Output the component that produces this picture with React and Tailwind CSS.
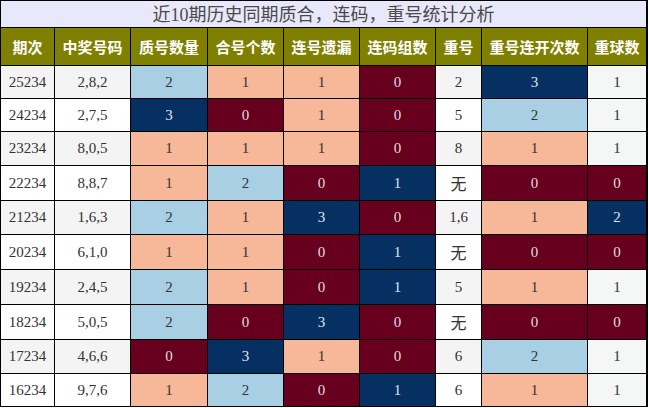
import React from "react";

const M = "bg-[#67001f] text-[#e4dede]";
const S = "bg-[#f7b799] text-[#333333]";
const L = "bg-[#a8cfe4] text-[#333333]";
const N = "bg-[#053061] text-[#e0e4ea]";

const heads = ["期次", "中奖号码", "质号数量", "合号个数", "连号遗漏", "连码组数", "重号", "重号连开次数", "重球数"];

const rows = [
  { h: "h-[32px]", c: ["25234", "2,8,2", ["2", L], ["1", S], ["1", S], ["0", M], "2", ["3", N], "1"] },
  { h: "h-[32px]", c: ["24234", "2,7,5", ["3", N], ["0", M], ["1", S], ["0", M], "5", ["2", L], "1"] },
  { h: "h-[33px]", c: ["23234", "8,0,5", ["1", S], ["1", S], ["1", S], ["0", M], "8", ["1", S], "1"] },
  { h: "h-[34px]", c: ["22234", "8,8,7", ["1", S], ["2", L], ["0", M], ["1", N], "无", ["0", M], ["0", M]] },
  { h: "h-[33px]", c: ["21234", "1,6,3", ["2", L], ["1", S], ["3", N], ["0", M], "1,6", ["1", S], ["2", N]] },
  { h: "h-[34px]", c: ["20234", "6,1,0", ["1", S], ["1", S], ["0", M], ["1", N], "无", ["0", M], ["0", M]] },
  { h: "h-[34px]", c: ["19234", "2,4,5", ["2", L], ["1", S], ["0", M], ["1", N], "5", ["1", S], "1"] },
  { h: "h-[34px]", c: ["18234", "5,0,5", ["2", L], ["0", M], ["3", N], ["0", M], "无", ["0", M], ["0", M]] },
  { h: "h-[33px]", c: ["17234", "4,6,6", ["0", M], ["3", N], ["1", S], ["0", M], "6", ["2", L], "1"] },
  { h: "h-[32px]", c: ["16234", "9,7,6", ["1", S], ["2", L], ["0", M], ["1", N], "6", ["1", S], "1"] },
];

export default function App() {
  return (
    <div className="w-[648px] h-[408px] bg-white">
      <div className="w-[648px] bg-black pt-px pb-px pl-px pr-[2px] flex flex-col gap-px">
        <div className="h-[26px] bg-[#e8e8fa] flex items-center justify-center text-[18px] leading-none text-[#4a4a4a]">
          <span className="font-['Noto_Sans_CJK_SC',sans-serif]">近<span className="font-['Liberation_Serif',serif]">10</span>期历史同期质合，连码，重号统计分析</span>
        </div>
        <div className="grid grid-cols-[53px_75px_76px_75px_75px_75px_45px_105px_58px] gap-px">
          {heads.map((t, i) => (
            <div key={i} className="h-[37px] bg-[#808000] flex items-center justify-center text-white font-bold text-[15px] leading-none font-['Noto_Sans_CJK_SC',sans-serif]">
              {t}
            </div>
          ))}
          {rows.map((r, ri) => {
            const plain = ri % 2 === 0 ? "bg-[#f4f4f4] text-[#333333]" : "bg-white text-[#333333]";
            return r.c.map((c, ci) => {
              const isArr = Array.isArray(c);
              const text = isArr ? c[0] : c;
              const cls = isArr ? c[1] : ci === 8 ? "bg-[#f5f6f6] text-[#333333]" : plain;
              const wu = text === "无";
              return (
                <div
                  key={ri + "-" + ci}
                  className={
                    r.h +
                    " " +
                    cls +
                    " flex items-center justify-center leading-none " +
                    (wu
                      ? "text-[16px] text-[#222222] font-['Noto_Sans_CJK_SC',sans-serif]"
                      : "text-[15px] font-['Liberation_Serif',serif]")
                  }
                >
                  {text}
                </div>
              );
            });
          })}
        </div>
      </div>
    </div>
  );
}
